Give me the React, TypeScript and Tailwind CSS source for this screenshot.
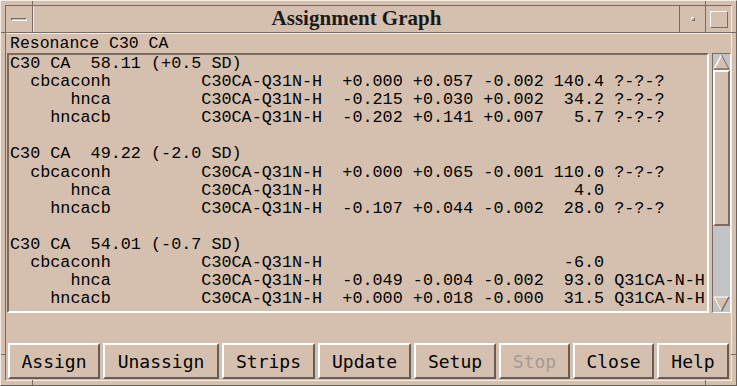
import React from "react";

// Motif-style "Assignment Graph" dialog

const lines: string[] = (() => {
  const row = (name: string, a = "", b = "", c = "", num = "", tag = "") =>
    name.padStart(10) +
    " ".repeat(9) +
    "C30CA-Q31N-H  " +
    a.padEnd(6) +
    " " +
    b.padEnd(6) +
    " " +
    c.padEnd(6) +
    " " +
    num.padStart(5) +
    " " +
    tag;
  return [
    "C30 CA  58.11 (+0.5 SD)",
    row("cbcaconh", "+0.000", "+0.057", "-0.002", "140.4", "?-?-?"),
    row("hnca", "-0.215", "+0.030", "+0.002", "34.2", "?-?-?"),
    row("hncacb", "-0.202", "+0.141", "+0.007", "5.7", "?-?-?"),
    "",
    "C30 CA  49.22 (-2.0 SD)",
    row("cbcaconh", "+0.000", "+0.065", "-0.001", "110.0", "?-?-?"),
    row("hnca", "", "", "", "4.0"),
    row("hncacb", "-0.107", "+0.044", "-0.002", "28.0", "?-?-?"),
    "",
    "C30 CA  54.01 (-0.7 SD)",
    row("cbcaconh", "", "", "", "-6.0"),
    row("hnca", "-0.049", "-0.004", "-0.002", "93.0", "Q31CA-N-H"),
    row("hncacb", "+0.000", "+0.018", "-0.000", "31.5", "Q31CA-N-H"),
  ];
})();

const buttons = [
  { label: "Assign", w: "w-[92px]" },
  { label: "Unassign", w: "w-[116px]" },
  { label: "Strips", w: "w-[93px]" },
  { label: "Update", w: "w-[93px]" },
  { label: "Setup", w: "w-[82px]" },
  { label: "Stop", w: "w-[71px]", disabled: true },
  { label: "Close", w: "w-[81px]" },
  { label: "Help", w: "w-[72px]" },
];

function Arrow({ down }: { down?: boolean }) {
  return (
    <svg width="17" height="16" viewBox="0 0 17 16" className="block">
      {down ? (
        <>
          <polygon points="1,1 16,1 8.5,15" fill="#d5c0b0" />
          <line x1="1" y1="1" x2="16" y2="1" stroke="#ffffff" />
          <line x1="1" y1="1" x2="8.5" y2="15" stroke="#ffffff" />
          <line x1="16" y1="1" x2="8.5" y2="15" stroke="#7a6b62" strokeWidth="1.5" />
        </>
      ) : (
        <>
          <polygon points="8.5,1 16,15 1,15" fill="#d5c0b0" />
          <line x1="8.5" y1="1" x2="1" y2="15" stroke="#ffffff" strokeWidth="1.5" />
          <line x1="8.5" y1="1" x2="16" y2="15" stroke="#7a6b62" />
          <line x1="1" y1="15" x2="16" y2="15" stroke="#7a6b62" strokeWidth="1.5" />
        </>
      )}
    </svg>
  );
}

export default function App() {
  return (
    <div className="relative w-[737px] h-[386px] bg-[#d5c0b0] border border-t-[#f3ebe4] border-l-[#f3ebe4] border-r-[#6f6058] border-b-[#6f6058] p-[4px] overflow-hidden">
      {/* frame resize ticks */}
      <div className="absolute left-[31px] top-0 w-px h-[5px] bg-[#7a6b62]" />
      <div className="absolute left-0 top-[31px] w-[5px] h-px bg-[#7a6b62]" />
      <div className="absolute left-[704px] top-0 w-px h-[5px] bg-[#7a6b62]" />
      <div className="absolute right-0 top-[31px] w-[5px] h-px bg-[#7a6b62]" />
      <div className="absolute left-[31px] bottom-0 w-px h-[5px] bg-[#7a6b62]" />
      <div className="absolute left-0 top-[353px] w-[5px] h-px bg-[#7a6b62]" />
      <div className="absolute left-[704px] bottom-0 w-px h-[5px] bg-[#7a6b62]" />
      <div className="absolute right-0 top-[353px] w-[5px] h-px bg-[#7a6b62]" />

      <div className="flex flex-col h-full border border-t-[#7a6b62] border-l-[#7a6b62] border-r-[#f3ebe4] border-b-[#f3ebe4]">
        {/* title bar */}
        <div className="flex h-[27px] border-b border-[#7a6b62]">
          <div className="w-[27px] flex items-center justify-center border-r border-[#7a6b62]">
            <div className="w-[16px] h-[3px] border-t border-l border-[#7a6b62] border-b border-r border-b-white border-r-white" />
          </div>
          <div className="flex-1 flex items-center justify-center border-l border-[#f3ebe4] font-['Liberation_Serif',serif] text-[21px] font-bold text-[#1a1a1a]">
            Assignment Graph
          </div>
          <div className="w-[26px] flex items-center justify-center border-l border-[#7a6b62]">
            <div className="w-[4px] h-[4px] border border-t-white border-l-white border-b-[#7a6b62] border-r-[#7a6b62] bg-[#cdb8a8]" />
          </div>
          <div className="w-[26px] flex items-center justify-center border-l border-[#7a6b62]">
            <div className="w-[18px] h-[17px] border border-t-white border-l-white border-b-[#7a6b62] border-r-[#7a6b62]" />
          </div>
        </div>

        {/* body */}
        <div className="flex-1 flex flex-col border-t border-[#f3ebe4]">
          <div className="h-[19px] pl-[4px] font-['Liberation_Mono',monospace] text-[16.5px] leading-[19px] text-black whitespace-pre">
            Resonance C30 CA
          </div>

          <div className="flex h-[260px] ml-[1px] gap-[3px]">
            <div className="w-[702px] h-full border-2 border-t-[#7a6b62] border-l-[#7a6b62] border-r-white border-b-white overflow-hidden pl-[1px]">
              <div className="font-['Liberation_Mono',monospace] text-[16.8px] leading-[18.1px] text-black whitespace-pre">
                {lines.map((l, i) => (
                  <div key={i} className="h-[18.1px]">
                    {l}
                  </div>
                ))}
              </div>
            </div>

            <div className="w-[19px] h-full border border-t-[#7a6b62] border-l-[#7a6b62] border-r-white border-b-white bg-[#c3c3c3] flex flex-col">
              <Arrow />
              <div className="h-[156px] border-2 border-t-white border-l-white border-r-[#7a6b62] border-b-[#7a6b62] bg-[#d5c0b0]" />
              <div className="flex-1" />
              <Arrow down />
            </div>
          </div>

          <div className="flex-1" />

          <div className="flex gap-[3px] ml-[2px] mb-[1px] h-[36px]">
            {buttons.map((b) => (
              <div
                key={b.label}
                className={`${b.w} h-full flex items-center justify-center border-2 border-t-white border-l-white border-r-[#6a5b52] border-b-[#6a5b52] font-['DejaVu_Sans_Mono',monospace] text-[18px] ${
                  b.disabled ? "text-[#a69a91]" : "text-black"
                }`}
              >
                {b.label}
              </div>
            ))}
          </div>
        </div>
      </div>
    </div>
  );
}
